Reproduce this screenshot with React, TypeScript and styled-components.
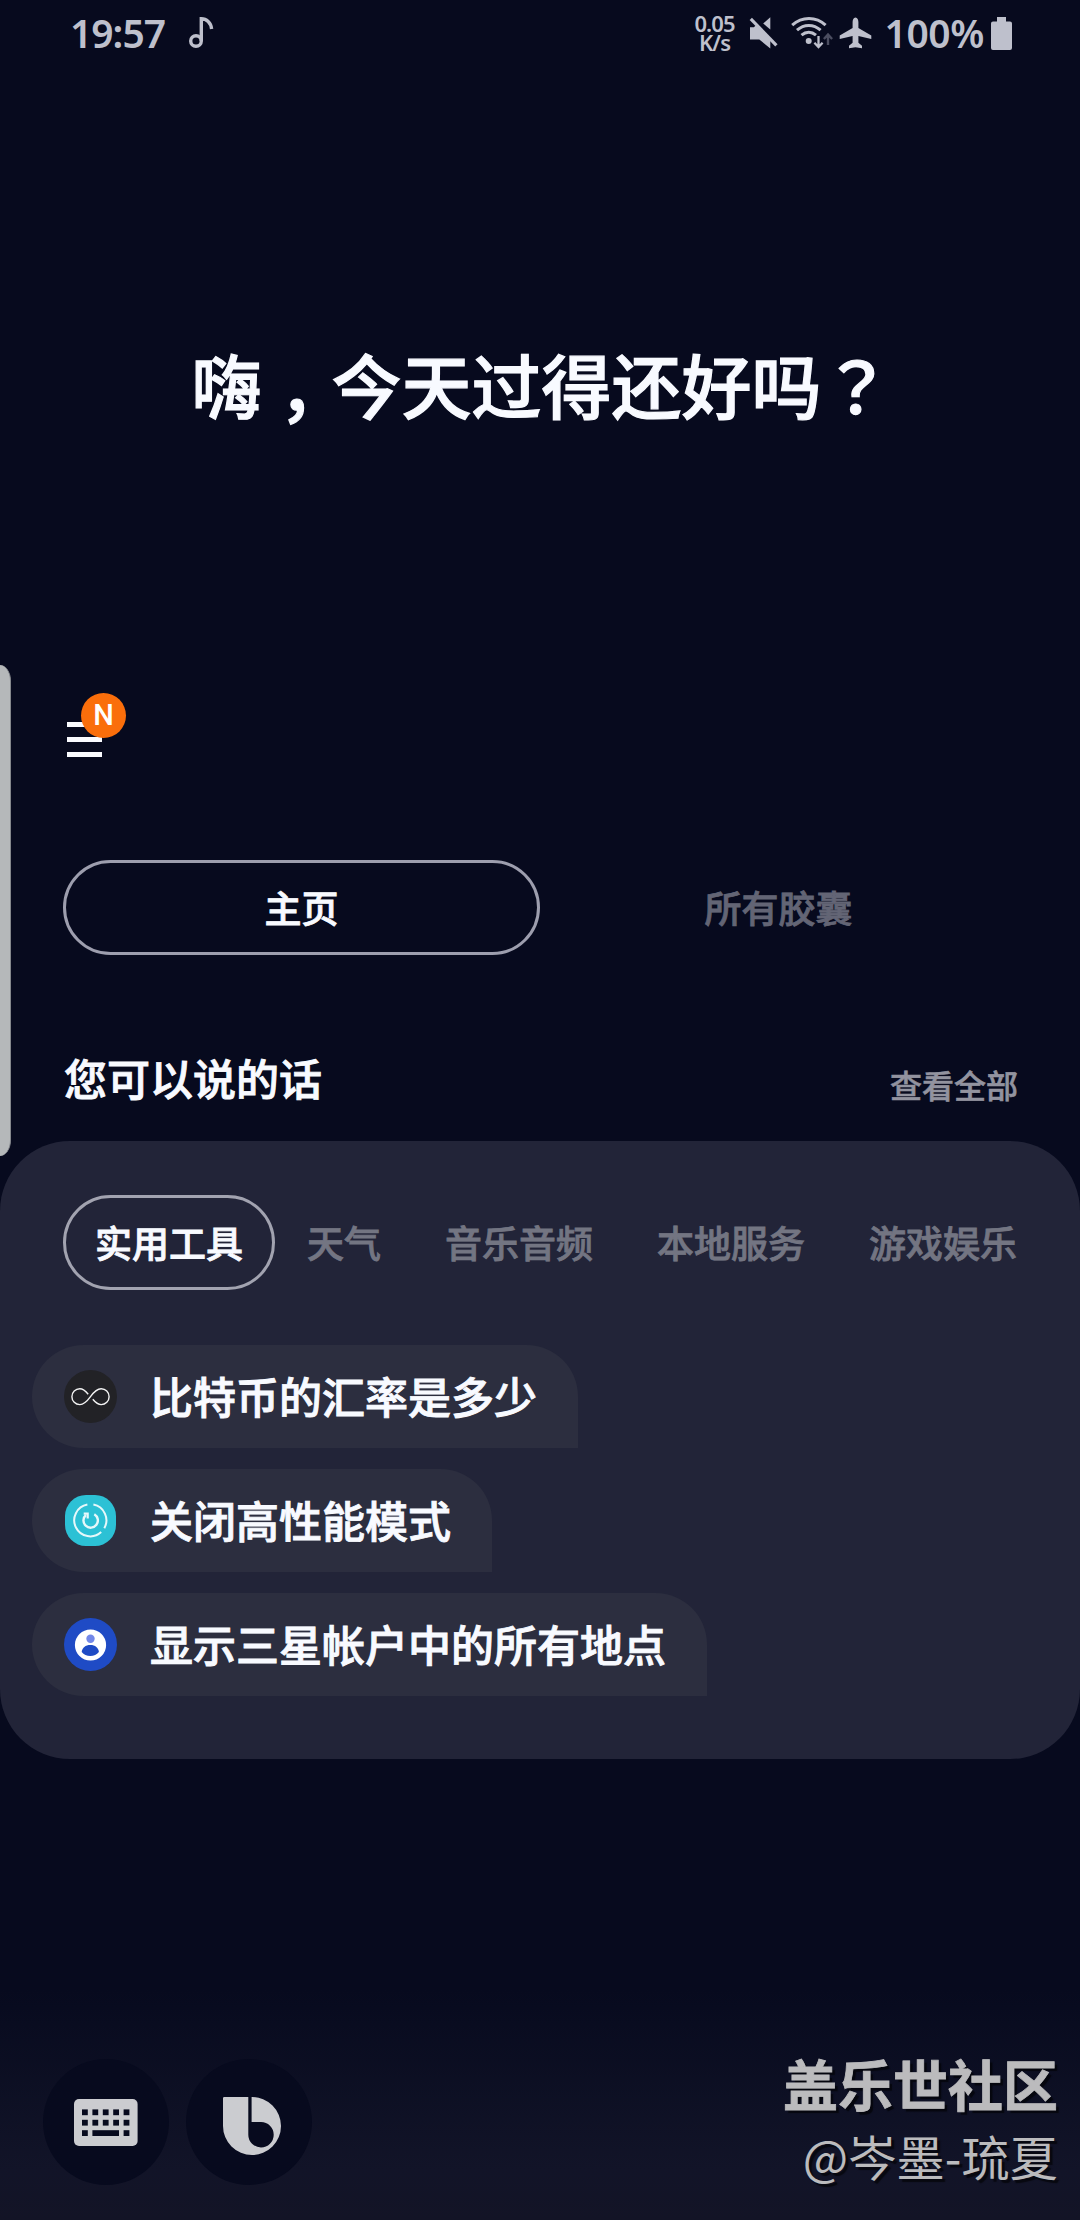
import React from "react";
import styled, { createGlobalStyle } from "styled-components";

const GlobalStyle = createGlobalStyle`
  *, *::before, *::after { box-sizing: border-box; }
  html, body { margin: 0; padding: 0; background: #070a1e; }
  body { font-family: "Noto Sans", "Noto Sans CJK SC", sans-serif; }
  button { font: inherit; color: inherit; background: none; border: 0; padding: 0; margin: 0; }
`;

const cjk = `"Noto Sans CJK SC", sans-serif`;

const Screen = styled.div`
  position: relative;
  width: 1080px;
  height: 2220px;
  overflow: hidden;
  display: flex;
  flex-direction: column;
  background: linear-gradient(180deg, #070a1e 0, #070a1e 1990px, #121428 2170px, #131426 2220px);
  color: #f8faff;
`;

const StatusBar = styled.header`
  height: 66px;
  padding: 0 68px 0 70px;
  display: flex;
  align-items: center;
  justify-content: space-between;
  color: #bec0cc;
`;

const StatusGroup = styled.div`
  display: flex;
  align-items: center;
`;

const StatusText = styled.span<{ $spacing?: number; $ml?: number }>`
  margin-left: ${(p) => p.$ml ?? 0}px;
  font-size: 39px;
  line-height: 66px;
  font-weight: 600;
  letter-spacing: ${(p) => p.$spacing ?? 0}px;
`;

const NetSpeed = styled.div`
  width: 42px;
  margin-right: 13px;
  display: flex;
  flex-direction: column;
  align-items: center;
  font-size: 22px;
  font-weight: 600;
  letter-spacing: -0.9px;
`;

const NetLine = styled.span`
  height: 19px;
  line-height: 19px;
`;

const Glyph = styled.svg<{ $ml?: number }>`
  display: block;
  flex: none;
  margin-left: ${(p) => p.$ml ?? 0}px;
`;

const Greeting = styled.h1`
  margin: 268px 0 0;
  height: 100px;
  line-height: 100px;
  font-family: ${cjk};
  font-size: 70px;
  font-weight: 500;
  -webkit-text-stroke: 1.2px currentColor;
  text-align: center;
  padding-left: 3px;
`;

const Punct = styled.span<{ $drop?: number }>`
  position: relative;
  top: ${(p) => p.$drop ?? 0}px;
  font-family: "Noto Sans CJK TC", sans-serif;
`;

const MenuRow = styled.div`
  margin-top: 259px;
  padding-left: 67px;
  height: 64px;
  display: flex;
  align-items: flex-end;
`;

const MenuButton = styled.button`
  position: relative;
  width: 35px;
  height: 35px;
  display: flex;
  flex-direction: column;
  justify-content: space-between;
`;

const MenuBar = styled.span`
  height: 5.4px;
  background: #fafbff;
`;

const Badge = styled.span`
  position: absolute;
  left: 14px;
  top: -29px;
  width: 45px;
  height: 45px;
  border-radius: 50%;
  background: #fa6e0b;
  display: flex;
  align-items: center;
  justify-content: center;
  font-family: Roboto, sans-serif;
  font-size: 29px;
  line-height: 45px;
  font-weight: 500;
  color: #fff;
`;

const MainTabs = styled.nav`
  margin-top: 103px;
  padding: 0 63px;
  display: flex;
`;

const MainTab = styled.button<{ $active?: boolean }>`
  width: 477px;
  height: 95px;
  border: 3px solid ${(p) => (p.$active ? "#9d9eae" : "transparent")};
  border-radius: 48px;
  font-family: ${cjk};
  font-size: 37px;
  font-weight: 500;
  -webkit-text-stroke: 0.8px currentColor;
  line-height: 89px;
  color: ${(p) => (p.$active ? "#f8faff" : "#636575")};
`;

const SectionHead = styled.div`
  margin-top: 92px;
  height: 94px;
  padding: 0 62px 0 64px;
  display: flex;
  justify-content: space-between;
`;

const SectionTitle = styled.h2`
  margin: 0;
  font-family: ${cjk};
  font-size: 43px;
  line-height: 60px;
  font-weight: 500;
  -webkit-text-stroke: 0.9px currentColor;
`;

const SeeAll = styled.button`
  font-family: ${cjk};
  font-size: 32px;
  font-weight: 500;
  -webkit-text-stroke: 0.6px currentColor;
  line-height: 60px;
  height: 60px;
  margin-top: 7px;
  color: #92939f;
`;

const Panel = styled.section`
  height: 618px;
  border-radius: 70px;
  background: #222438;
  padding: 54px 32px 0;
`;

const Chips = styled.div`
  display: flex;
  padding-left: 31px;
`;

const Chip = styled.button<{ $active?: boolean }>`
  flex: none;
  height: 95px;
  padding: 0 29px;
  border: 3px solid ${(p) => (p.$active ? "#a2a3b0" : "transparent")};
  border-radius: 48px;
  font-family: ${cjk};
  font-size: 37px;
  font-weight: 500;
  -webkit-text-stroke: 0.8px currentColor;
  line-height: 89px;
  color: ${(p) => (p.$active ? "#f8faff" : "#737582")};
`;

const Suggestions = styled.div`
  margin-top: 55px;
  display: flex;
  flex-direction: column;
  align-items: flex-start;
  gap: 21px;
`;

const Suggestion = styled.button`
  height: 103px;
  padding: 0 41px 0 32px;
  display: flex;
  align-items: center;
  gap: 33px;
  border-radius: 52px 52px 0 52px;
  background: #2c2e3f;
`;

const SuggestionText = styled.span`
  height: 103px;
  line-height: 100px;
  font-family: ${cjk};
  font-size: 43px;
  font-weight: 500;
  -webkit-text-stroke: 0.9px currentColor;
`;

const Footer = styled.footer`
  margin-top: auto;
  height: 200px;
  padding: 0 22px 0 43px;
  display: flex;
  justify-content: space-between;
`;

const RoundButtons = styled.div`
  display: flex;
  gap: 17px;
  padding-top: 39px;
`;

const RoundButton = styled.button`
  width: 126px;
  height: 126px;
  border-radius: 50%;
  background: #070a1e;
  display: flex;
  align-items: center;
  justify-content: center;
`;

const Watermark = styled.div`
  display: flex;
  flex-direction: column;
  align-items: flex-end;
  font-family: ${cjk};
  color: #bbbbbd;
  text-shadow: 3px 3px 1px rgba(0, 0, 0, 0.6);
`;

const Community = styled.span`
  margin-top: 22px;
  font-size: 55px;
  line-height: 80px;
  font-weight: 700;
  -webkit-text-stroke: 0.8px currentColor;
`;

const Author = styled.span`
  margin-top: 1px;
  font-size: 48px;
  line-height: 64px;
  font-weight: 400;
  letter-spacing: 0.2px;
`;

const EdgeHandle = styled.div`
  position: absolute;
  left: 0;
  top: 665px;
  width: 11px;
  height: 491px;
  border-radius: 0 11px 11px 0 / 0 16px 16px 0;
  background: #b5b8ba;
  border-right: 1px solid #85888d;
`;

const CapsuleIcons: Record<string, React.ReactNode> = {
  infinity: (
    <Glyph width="53" height="53" viewBox="0 0 53 53">
      <circle cx="26.5" cy="26.5" r="26.5" fill="#222226" />
      <path
        d="M24.2 24.2 C21.5 20.8 18.8 18.8 15.8 18.8 a7.9 7.9 0 0 0 0 15.8 C20.3 34.6 23.5 30.8 26.5 26.7 C29.5 22.5 32.7 18.8 37.2 18.8 a7.9 7.9 0 0 1 0 15.8 C34.2 34.6 31.5 32.5 28.8 29.2"
        fill="none"
        stroke="#f3f3f3"
        strokeWidth="1.4"
      />
    </Glyph>
  ),
  power: (
    <Glyph width="53" height="53" viewBox="0 0 53 53">
      <rect x="1" y="1" width="51" height="51" rx="21" fill="#2cc1d5" />
      <g fill="none" stroke="#e6f8fa" strokeWidth="2">
        <path d="M23.4 10.6 A16 16 0 1 0 37.2 38" />
        <path d="M29.4 10.6 A16 16 0 0 1 40.3 34.2" />
        <path d="M22 21 A7.2 7.2 0 1 0 30.3 20.3" strokeWidth="2.4" />
        <path d="M19.7 19.7 H23.7 V24.4" strokeWidth="2.2" />
      </g>
    </Glyph>
  ),
  account: (
    <Glyph width="53" height="53" viewBox="0 0 53 53">
      <circle cx="26.5" cy="26.5" r="26.5" fill="#1f4bc5" />
      <circle cx="26.5" cy="27" r="15.6" fill="#fff" />
      <circle cx="26.5" cy="20.8" r="4.2" fill="#7388e8" />
      <path d="M17.7 34 C18 29.6 21.5 26.9 26.3 26.9 S34.6 29.6 34.9 34 C32.8 36.6 29.8 38 26.3 38 S19.8 36.6 17.7 34 Z" fill="#1f4bc5" />
    </Glyph>
  ),
};

const MusicIcon = () => (
  <Glyph $ml={23} width="26" height="34" viewBox="0 0 26 34" fill="none" stroke="currentColor" strokeWidth="3.4">
    <circle cx="8" cy="25" r="5.3" />
    <path d="M13.3 25 V2.7 C18.5 2.7 23 6.5 23.6 13" />
  </Glyph>
);

const MuteIcon = () => (
  <Glyph width="29" height="32" viewBox="0 0 29 32" fill="currentColor">
    <path d="M1 10.2 H4.8 L7 8.2 L21.3 22.5 V31.5 L10.3 22.5 H1 Z" />
    <path d="M21.3 .3 V12.6 L14.2 6.4 Z" />
    <path d="M1.8 1.8 L27.4 28.4" stroke="currentColor" strokeWidth="3.2" />
  </Glyph>
);

const WifiIcon = () => (
  <Glyph $ml={13} width="42" height="34" viewBox="0 0 42 34" fill="none" stroke="currentColor" strokeWidth="3">
    <path d="M1.2 9.2 C11 .2 25 .2 34.6 9.2" />
    <path d="M6 14.2 C13 7.8 22.5 7.8 29.6 14.2" />
    <path d="M10.5 19.2 C15 15.4 20.5 15.4 25 19.2" />
    <circle cx="17.7" cy="25" r="3" fill="currentColor" stroke="none" />
    <path d="M27.5 20 V30.5 M23.4 26.7 L27.5 31 L31.6 26.7" strokeWidth="2.3" />
    <path d="M37 29 V19.5 M32.9 23 L37 18.6 L41.1 23" strokeWidth="2.4" stroke="#4b4d60" />
  </Glyph>
);

const PlaneIcon = () => (
  <Glyph $ml={6} width="33" height="32" viewBox="0 0 33 32" fill="currentColor">
    <path d="M16.5 .5 C18.5 .5 19.4 3 19.4 5 V11 L32.3 18.6 V22 L19.4 19 V25.8 L23 28.8 V31.2 L16.5 30.2 L10 31.2 V28.8 L13.6 25.8 V19 L.7 22 V18.6 L13.6 11 V5 C13.6 3 14.5 .5 16.5 .5 Z" />
  </Glyph>
);

const BatteryIcon = () => (
  <Glyph $ml={7} width="21" height="33" viewBox="0 0 21 33" fill="currentColor">
    <path d="M6 0 H15 V4.5 H19 a2 2 0 0 1 2 2 V31 a2 2 0 0 1 -2 2 H2 a2 2 0 0 1 -2 -2 V6.5 a2 2 0 0 1 2 -2 H6 Z" />
  </Glyph>
);

const keyColumns = [8, 18.4, 28.8, 39.2, 49.6];

const KeyboardIcon = () => (
  <Glyph width="64" height="47" viewBox="0 0 64 47">
    <rect width="63.6" height="47" rx="5" fill="#cbccd0" />
    <g fill="#070a1e">
      {keyColumns.map((x) => (
        <React.Fragment key={x}>
          <rect x={x} y="10.4" width="5.8" height="5.8" />
          <rect x={x} y="20.8" width="5.8" height="5.8" />
        </React.Fragment>
      ))}
      <rect x="8" y="31.2" width="5.8" height="5.8" />
      <rect x="18.4" y="31.2" width="26.6" height="5.8" />
      <rect x="49.6" y="31.2" width="5.8" height="5.8" />
    </g>
  </Glyph>
);

const BixbyIcon = () => (
  <Glyph $ml={5} width="58" height="65" viewBox="0 -7 58 65">
    <path d="M1.2 0 H29 A29 29 0 1 1 0 29 V1.2 A1.2 1.2 0 0 1 1.2 0 Z" fill="#cbccd0" />
    <path d="M25.3 -1 H28.6 V25 H38 A12.7 12.7 0 1 1 25.3 37.7 Z" fill="#070a1e" />
  </Glyph>
);

const chips = ["实用工具", "天气", "音乐音频", "本地服务", "游戏娱乐"];

const suggestions = [
  { icon: "infinity", text: "比特币的汇率是多少" },
  { icon: "power", text: "关闭高性能模式" },
  { icon: "account", text: "显示三星帐户中的所有地点" },
];

export default function App() {
  return (
    <>
      <GlobalStyle />
      <Screen>
        <StatusBar>
          <StatusGroup>
            <StatusText $spacing={-1}>19:57</StatusText>
            <MusicIcon />
          </StatusGroup>
          <StatusGroup>
            <NetSpeed>
              <NetLine>0.05</NetLine>
              <NetLine>K/s</NetLine>
            </NetSpeed>
            <MuteIcon />
            <WifiIcon />
            <PlaneIcon />
            <StatusText $spacing={-0.4} $ml={13}>
              100%
            </StatusText>
            <BatteryIcon />
          </StatusGroup>
        </StatusBar>

        <Greeting>
          嗨<Punct $drop={23}>，</Punct>今天过得还好吗<Punct>？</Punct>
        </Greeting>

        <MenuRow>
          <MenuButton>
            <MenuBar />
            <MenuBar />
            <MenuBar />
            <Badge>N</Badge>
          </MenuButton>
        </MenuRow>

        <MainTabs>
          <MainTab $active>主页</MainTab>
          <MainTab>所有胶囊</MainTab>
        </MainTabs>

        <SectionHead>
          <SectionTitle>您可以说的话</SectionTitle>
          <SeeAll>查看全部</SeeAll>
        </SectionHead>

        <Panel>
          <Chips>
            {chips.map((label, i) => (
              <Chip key={label} $active={i === 0}>
                {label}
              </Chip>
            ))}
          </Chips>
          <Suggestions>
            {suggestions.map((s) => (
              <Suggestion key={s.text}>
                {CapsuleIcons[s.icon]}
                <SuggestionText>{s.text}</SuggestionText>
              </Suggestion>
            ))}
          </Suggestions>
        </Panel>

        <Footer>
          <RoundButtons>
            <RoundButton>
              <KeyboardIcon />
            </RoundButton>
            <RoundButton>
              <BixbyIcon />
            </RoundButton>
          </RoundButtons>
          <Watermark>
            <Community>盖乐世社区</Community>
            <Author>@岑墨-琉夏</Author>
          </Watermark>
        </Footer>
        <EdgeHandle />
      </Screen>
    </>
  );
}
